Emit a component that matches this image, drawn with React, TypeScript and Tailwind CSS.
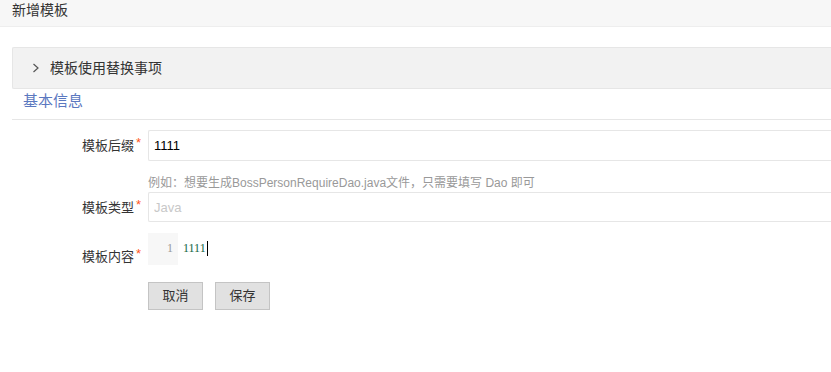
import { useState } from "react"

const cjk = '"Liberation Sans", "Noto Sans CJK SC", sans-serif'

function FieldLabel({ text, className = "" }: { text: string; className?: string }) {
  return (
    <div className={`w-[148px] shrink-0 pr-[7px] text-right text-[13px] text-[#333] ${className}`}>
      {text}
      <span className="relative top-[-3px] ml-[2px] text-[13px] text-[#ff5722]">*</span>
    </div>
  )
}

export default function App() {
  const [suffix, setSuffix] = useState("1111")

  return (
    <div className="w-full overflow-hidden bg-white" style={{ fontFamily: cjk }}>
      <div className="h-[27px] border-b border-[#eeeeee] bg-[#f7f7f7] px-3 text-[14px] leading-[20px] text-[#333]">
        新增模板
      </div>

      <div className="pl-3">
        <div className="mt-[20px] flex h-[42px] items-center rounded-l-[2px] border border-r-0 border-[#e6e6e6] bg-[#f2f2f2] pl-[19px] text-[14px] text-[#333]">
          <svg width="8" height="10" viewBox="0 0 8 10" className="mr-[10px]">
            <polyline points="1.5,1 6,5 1.5,9" fill="none" stroke="#555" strokeWidth="1.2" />
          </svg>
          模板使用替换事项
        </div>

        <div className="h-[31px] border-b border-[#e6e6e6] pl-[11px] pt-[1px] text-[15px] leading-[22px] text-[#5b78c0]">
          基本信息
        </div>
      </div>

      <div className="flex flex-col">
        <div className="mt-[10px] flex items-center">
          <FieldLabel text="模板后缀" />
          <input
            value={suffix}
            onChange={(e) => setSuffix(e.target.value)}
            className="h-[31px] flex-1 rounded-l-[2px] border border-r-0 border-[#e6e6e6] px-[5px] text-[13px] text-black outline-none"
          />
        </div>
        <div className="ml-[148px] mt-[13px] text-[12px] leading-[18px] text-[#999]">
          例如：想要生成BossPersonRequireDao.java文件，只需要填写 Dao 即可
        </div>

        <div className="flex items-center">
          <FieldLabel text="模板类型" className="pt-[2px]" />
          <input
            placeholder="Java"
            className="h-[30px] flex-1 rounded-l-[2px] border border-r-0 border-[#e6e6e6] px-[5px] text-[13px] outline-none placeholder:text-[#c8c8c8]"
          />
        </div>

        <div className="mt-[11px] flex items-start">
          <FieldLabel text="模板内容" className="pt-[14px]" />
          <div className="flex h-[32px] items-start" style={{ fontFamily: '"Liberation Serif", serif' }}>
            <div className="h-full w-[30px] bg-[#f7f7f7] pr-[5px] pt-[8px] text-right text-[12px] leading-[15px] text-[#999]">
              1
            </div>
            <div className="flex items-center pl-[5px] pt-[8px] text-[12px] leading-[15px] text-[#116644]">
              1111
              <span className="ml-[1px] inline-block h-[15px] w-[1px] bg-black" />
            </div>
          </div>
        </div>

        <div className="ml-[148px] mt-[15px] flex gap-[12px]">
          <button className="h-[28px] w-[55px] border border-[#c4c4c4] bg-[#e1e1e1] text-[13px] text-[#333]">
            取消
          </button>
          <button className="h-[28px] w-[55px] border border-[#c4c4c4] bg-[#e1e1e1] text-[13px] text-[#333]">
            保存
          </button>
        </div>
      </div>
    </div>
  )
}
